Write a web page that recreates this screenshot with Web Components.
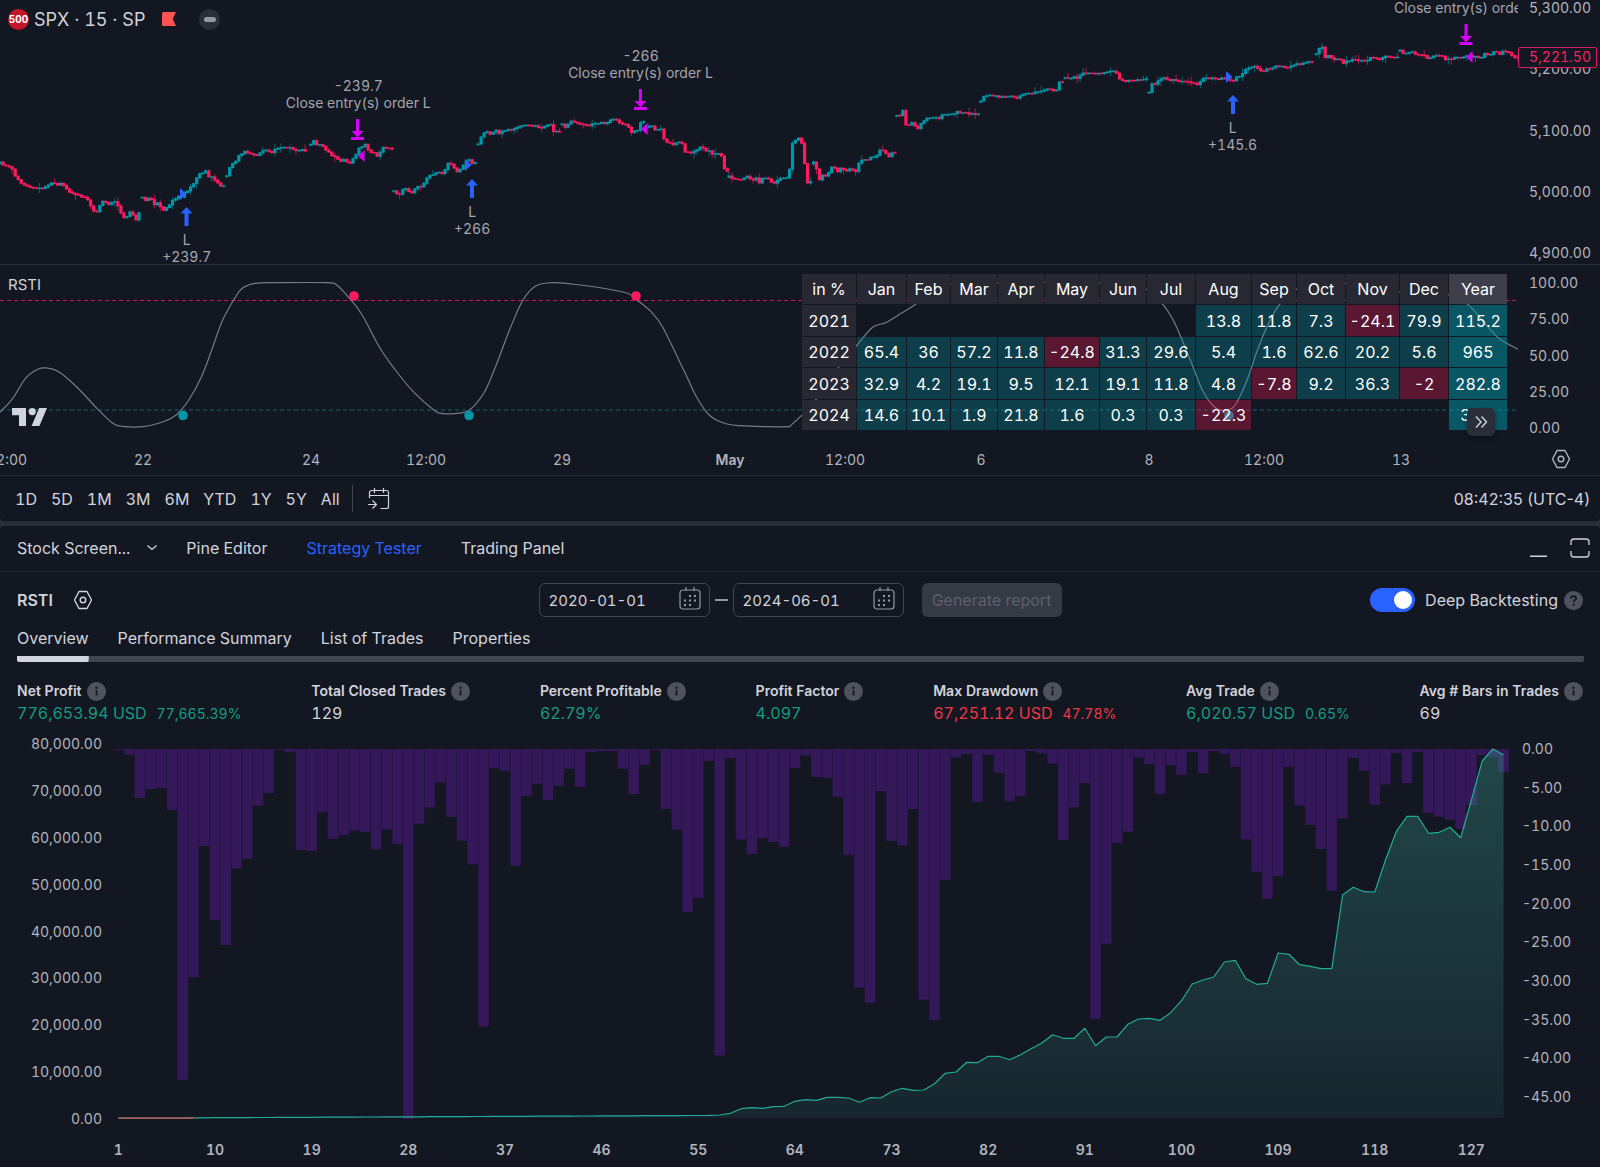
<!DOCTYPE html>
<html lang="en">
<head>
<meta charset="utf-8">
<title>SPX · Strategy Tester</title>
<style>
  html, body { margin: 0; padding: 0; }
  body {
    background: #131722;
    color: #d1d4dc;
    font-family: Inter, "Liberation Sans", sans-serif;
    font-size: 16px;
    font-variant-numeric: tabular-nums;
    --bg: #131722;
    --line: #2a2e39;
    --muted: #b2b5be;
    --up: #0097a7;
    --down: #ff1a5e;
    --blue: #2962ff;
    --green: #159b80;
    --red: #f23645;
  }
</style>
</head>
<body>
<trading-page></trading-page>
<script>
const define = (name, html, setup) => {
  const tpl = document.createElement('template');
  tpl.innerHTML = html;
  customElements.define(name, class extends HTMLElement {
    constructor() {
      super();
      this.attachShadow({ mode: 'open' }).append(tpl.content.cloneNode(true));
    }
    connectedCallback() { if (setup) setup(this, this.shadowRoot); }
  });
};

/* ---------- icons ---------- */
const hexagon = '<path d="M6 1.500h8l4.500 8.500-4.500 8.500H6L1.500 10z" stroke-width="1.400" stroke-linejoin="round"/><circle cx="10" cy="10" r="2.800" stroke-width="1.400"/>';
const ICONS = {
  hex: [20, 20, hexagon],
  goto: [24, 24, '<path d="M2.500 11V5.500a2 2 0 0 1 2-2h15a2 2 0 0 1 2 2v14a2 2 0 0 1-2 2h-6M2.500 8.500h19M7.500 1v5M16.500 1v5M1 17.500h8M5.500 13.500l4 4-4 4"/>'],
  chevron: [12, 8, '<path d="M1.500 1.500 6 5.500l4.500-4" stroke-width="1.300"/>'],
  minimise: [18, 20, '<path d="M0 18.200h17" stroke-width="1.500"/>'],
  maximise: [20, 20, '<path d="M1 7V4a3 3 0 0 1 3-3h12a3 3 0 0 1 3 3v3M1 13v3a3 3 0 0 0 3 3h12a3 3 0 0 0 3-3v-3" stroke-width="1.300"/>'],
  calendar: [22, 24, '<rect x="1" y="3" width="20" height="19" rx="3"/><path d="M7 0v4M15 0v4"/><g fill="currentColor" stroke="none"><rect x="10" y="8" width="2" height="2"/><rect x="15" y="8" width="2" height="2"/><rect x="5" y="12.500" width="2" height="2"/><rect x="10" y="12.500" width="2" height="2"/><rect x="15" y="12.500" width="2" height="2"/><rect x="5" y="17" width="2" height="2"/><rect x="10" y="17" width="2" height="2"/></g>'],
  info: [19, 19, '<circle cx="9.500" cy="9.500" r="9.500" fill="#50535e" stroke="none"/><path d="M9.500 8.300v5.200" stroke="#131722" stroke-width="1.800"/><circle cx="9.500" cy="5.700" r="1.200" fill="#131722" stroke="none"/>'],
  help: [19, 19, '<circle cx="9.500" cy="9.500" r="9.500" fill="#50535e" stroke="none"/><path d="M6.900 7.600c0-3.300 5.300-3.200 5.300-.3 0 1.800-2.600 1.900-2.600 4" stroke="#131722" stroke-width="1.800"/><circle cx="9.600" cy="13.800" r="1.100" fill="#131722" stroke="none"/>'],
  forward: [16, 16, '<path d="M3 2.500 8 8l-5 5.500M8.500 2.500l5 5.500-5 5.500" stroke-width="1.400"/>'],
  flag: [14, 14, '<path d="M1.500 0H14l-3.300 7L14 14H1.500A1.500 1.500 0 0 1 0 12.500v-11A1.500 1.500 0 0 1 1.500 0z" fill="#ff5252" stroke="none"/>'],
  logo: [36, 18, '<g fill="currentColor" stroke="none"><path d="M0 0h14v18H7V7.200H0z"/><circle cx="20.200" cy="3.600" r="3.600"/><path d="M27.200 0H35l-7.600 18h-7.800z"/></g>']
};
define('tv-icon', `<style>:host{display:block;flex:none}svg{display:block}</style>`, (host, root) => {
  const [w, h, body] = ICONS[host.getAttribute('name')];
  root.innerHTML += `<svg width="${w}" height="${h}" viewBox="0 0 ${w} ${h}" fill="none" stroke="currentColor" stroke-width="1.200" aria-hidden="true">${body}</svg>`;
});

/* ---------- shared tick row: each tick takes the space up to its own position ---------- */
define('tick-row', `
<style>
  :host { display: flex; line-height: 18px; }
  i { font-style: normal; display: flex; justify-content: flex-end; min-width: 0; }
  span { width: 0; display: flex; justify-content: center; white-space: nowrap; }
  .b { font-weight: 600; }
</style>`, (host, root) => {
  let last = 0;
  for (const item of host.getAttribute('ticks').split('|')) {
    const [at, label] = item.split('=');
    const cell = document.createElement('i');
    cell.style.flex = `${at - last} 0 0`;
    last = +at;
    const text = document.createElement('span');
    text.textContent = label.replace('*', '');
    if (label.startsWith('*')) text.className = 'b';
    cell.append(text);
    root.append(cell);
  }
  const rest = document.createElement('i');
  rest.style.flex = `${host.getAttribute('span') - last} 0 0`;
  root.append(rest);
});

define('value-axis', `
<style>
  :host { display: flex; flex-direction: column; justify-content: space-between; line-height: 16px; font-size: 14px; color: var(--muted); box-sizing: border-box; }
</style>`, (host, root) => {
  for (const v of host.getAttribute('values').split(' ')) {
    const s = document.createElement('span');
    s.textContent = v;
    root.append(s);
  }
});

/* ---------- price pane ---------- */
const SX = 2.904, TX = 2.8;
const SEGMENTS = [
  [0, SX, '0,488 18,497 36,508 45,530 60,548 80,556 95,565 110,560 120,568 133,556 150,548 165,556 178,550 190,560 205,578 225,582 240,590 255,598 265,625 275,638 283,630 295,602 305,606 315,612 330,600 340,615 348,625 355,655 368,650 378,637 388,645 395,658 402,640 410,638'],
  [0, SX, '413,590 420,602 430,594 440,598 445,616 460,608 468,622 476,630 485,618 497,608 505,595 520,588 530,590 540,572 550,568 557,552 568,548 572,525 585,518 597,512 600,530 612,530 620,535 630,545 640,556 655,558'],
  [0, SX, '658,526 665,505 672,490 685,485 690,468 700,460 710,453 725,460 740,468 748,466 757,452 775,450 790,460 800,448 812,440 845,440 855,450 875,449 893,451'],
  [0, SX, '902,432 910,418 915,432 935,433 945,448 955,455 962,466 975,472 985,482 1000,480 1015,488 1022,478 1035,462 1045,440 1060,433 1070,452 1085,457 1095,468 1103,455 1112,443 1125,444 1140,447'],
  [0, SX, '1143,570 1155,582 1165,578 1175,560 1185,572 1198,578 1207,560 1220,560 1232,545 1245,528 1260,520 1275,514 1287,522 1295,498 1305,485 1315,495 1322,512 1332,515 1345,495 1360,475 1368,488 1385,490'],
  [0, SX, '1388,430 1392,420 1400,405 1410,388 1420,402 1430,398 1440,388 1450,400 1465,390 1482,390 1497,384 1512,374 1532,374 1552,378 1572,385 1584,378 1600,374 1607,393 1624,395'],
  [500, SX, '180,370 185,382 197,375 205,362 220,365 235,372 255,376 270,372 290,366 308,370 320,358 335,359 350,368 365,375 378,380 382,400 392,392 402,388 407,365 420,365'],
  [500, SX, '432,378 445,380 452,396 460,385 472,388 478,430 490,426 500,436 515,428 528,428 532,458 545,455 555,460 570,450 583,440 595,450 610,455 618,465 630,460 648,467 652,512 662,514'],
  [500, SX, '665,528 675,538 690,540 705,535 718,528 732,540 742,530 752,548 760,534 775,535 785,545 798,552 808,538 825,534 838,528 842,495 848,430 858,420 868,412 876,430 884,490 893,546 905,545'],
  [500, SX, '910,488 918,505 928,540 940,515 948,535 958,507 968,497 980,512 992,500 1002,516 1015,508 1035,512 1040,490 1050,478 1065,480 1078,470 1095,465 1103,452 1118,454 1128,472 1138,460 1150,460'],
  [500, SX, '1152,345 1160,345 1170,328 1176,376 1188,375 1197,364 1205,380 1215,388 1222,370 1235,358 1255,350 1272,356 1282,345 1305,345 1325,335 1345,340 1370,339 1392,344'],
  [500, SX, '1396,303 1400,290 1430,286 1460,291 1480,288 1500,293 1520,283 1545,280 1568,272 1578,267 1615,272 1622,248 1635,247'],
  [1040, TX, '70,230 82,236 92,228 105,235 115,220 140,218 165,220 185,219 205,213 215,220 218,238 240,242 260,240 280,237 300,234'],
  [1040, TX, '305,275 312,250 322,255 335,238 350,232 362,239 380,241 400,243 420,245 440,252 455,238 470,233 495,238 515,234 540,243 550,232 570,220 578,205 600,199 612,208 625,212 640,206 660,198 680,199 700,201 715,193 740,188 768,184'],
  [1040, TX, '773,160 780,145 790,143 797,172 810,165 820,178 840,178 850,190 860,180 890,181 915,185 925,173 950,176 965,170 1003,169'],
  [1040, TX, '1008,150 1015,160 1040,157 1065,163 1085,173 1105,165 1125,166 1130,180 1150,175 1170,174 1188,170 1215,168 1238,172 1245,160 1260,168 1275,148 1283,168 1295,155 1310,155 1320,168 1340,172']
];
function candles() {
  let seed = 11, out = '';
  const rnd = () => (seed = (seed * 16807) % 2147483647) / 2147483647;
  for (const [origin, scale, list] of SEGMENTS) {
    const pts = list.split(' ').map(p => { const [x, y] = p.split(','); return [origin + x / scale, y / 3]; });
    const end = pts[pts.length - 1][0];
    let k = 0, open = pts[0][1] + 1;
    for (let x = pts[0][0]; x <= end + 0.5; x += 3.02) {
      while (k < pts.length - 2 && pts[k + 1][0] < x) k++;
      const [x0, y0] = pts[k], [x1, y1] = pts[k + 1];
      const t = Math.min(1, Math.max(0, (x - x0) / (x1 - x0)));
      const close = y0 + (y1 - y0) * t + (rnd() - 0.5) * 1.8;
      const up = close <= open, top = Math.min(open, close) - 0.3, h = Math.max(1.5, Math.abs(open - close) + 1);
      const wick = rnd() < 0.25 ? 5 : 1.5;
      const col = up ? 'var(--up)' : 'var(--down)';
      out += `<path d="M${x.toFixed(1)} ${(top - rnd() * wick).toFixed(1)}V${(top + h + rnd() * wick).toFixed(1)}" stroke="${col}" stroke-width=".8" opacity=".8"/>`;
      out += `<rect x="${(x - 1.5).toFixed(1)}" y="${top.toFixed(1)}" width="3.200" height="${h.toFixed(1)}" fill="${col}"/>`;
      open = close;
    }
  }
  return out;
}
define('price-pane', `
<style>
  :host { display: flex; height: 264px; border-bottom: 1px solid var(--line); position: relative; }
  .plot { flex: 1; position: relative; overflow: hidden; }
  .plot > svg { display: block; width: 100%; height: 264px; }
  value-axis { width: 82px; padding: 0 0 3px 11px; }
  header { position: absolute; left: 8px; top: 8px; height: 22px; display: flex; align-items: center; }
  h1 { margin: 0 17px 0 5px; font-size: 18px; font-weight: 400; }
  .badge { width: 21px; height: 21px; border-radius: 50%; background: #c4162a; color: #fff; font-size: 10px; font-weight: 700; display: flex; align-items: center; justify-content: center; }
  header button { margin-left: 23px; width: 21px; height: 21px; border: 0; border-radius: 50%; background: var(--line); padding: 0; display: flex; align-items: center; justify-content: center; }
  header button::before { content: ""; width: 12px; height: 5px; border-radius: 3px; background: #9598a1; }
  .note { position: absolute; width: 0; display: flex; flex-direction: column; align-items: center; white-space: nowrap; font-size: 14px; line-height: 17px; color: #a3a6af; }
  .last { position: absolute; right: 3px; top: 47px; width: 79px; height: 21px; box-sizing: border-box; border: 1px solid #d81b60; border-radius: 2px; background: var(--bg); color: #f7215d; font-size: 14px; line-height: 18px; padding-left: 10px; }
</style>
<div class="plot">
  <svg viewBox="0 0 1518 264" preserveAspectRatio="none" role="img" aria-label="SPX price candles"></svg>
  <div class="note" style="left:23.600%;top:77px"><span>-239.7</span><span>Close entry(s) order L</span></div>
  <div class="note" style="left:42.200%;top:47px"><span>-266</span><span>Close entry(s) order L</span></div>
  <div class="note" style="left:96.600%;top:-1px"><span>Close entry(s) order L</span></div>
  <div class="note" style="left:12.300%;top:231px"><span>L</span><span>+239.7</span></div>
  <div class="note" style="left:31.100%;top:203px"><span>L</span><span>+266</span></div>
  <div class="note" style="left:81.200%;top:119px"><span>L</span><span>+145.6</span></div>
</div>
<value-axis values="5,300.00 5,200.00 5,100.00 5,000.00 4,900.00"></value-axis>
<div class="last">5,221.50</div>
<header><span class="badge">500</span><h1>SPX · 15 · SP</h1><tv-icon name="flag"></tv-icon><button aria-label="Collapse legend"></button></header>`,
(host, root) => {
  let marks = '';
  for (const [x, y] of [[357.5, 119], [640.5, 89], [1466, 24]])
    marks += `<path d="M${x - 1.5} ${y}h3v12h4.500l-6 6.500-6-6.500h4.500zM${x - 6.500} ${y + 18}h13v3h-13z"/>`;
  for (const [x, y] of [[358, 150], [641, 123], [1466, 51]]) marks += `<path d="M${x} ${y + 6}l6.500-6v12z"/>`;
  let buys = '';
  for (const [x, y] of [[186.5, 208], [472, 180], [1233, 96]])
    buys += `<path d="M${x} ${y - 1}l6 6.500h-4v12.500h-4v-12.500h-4z"/>`;
  for (const [x, y] of [[180, 188], [465, 159], [1226, 71]]) buys += `<path d="M${x} ${y}l6.500 6-6.500 6z"/>`;
  root.querySelector('.plot > svg').innerHTML = candles() + `<g fill="#d500f9">${marks}</g><g fill="#2962ff">${buys}</g>`;
});

/* ---------- monthly returns ---------- */
define('returns-table', `
<style>
  :host { display: block; }
  table { border-collapse: separate; border-spacing: 1px; table-layout: fixed; width: 707px; font-size: 16px; color: #fff; }
  th, td { height: 30px; padding: 0; text-align: center; font-weight: 400; line-height: 20px; white-space: nowrap; }
  tr:nth-child(even) > * { height: 31px; }
  th { background: #282832; }
  th.y { background: #3f3f4b; }
  td.p { background: rgba(0,151,167,.3); }
  td.n { background: rgba(255,23,90,.3); }
  td.y { background: rgba(0,151,167,.5); }
</style>
<table></table>`, (host, root) => {
  const widths = [54, 49, 43, 46, 46, 54, 46, 48, 55, 44, 48, 53, 48, 58];
  const rows = [
    'in % Jan Feb Mar Apr May Jun Jul Aug Sep Oct Nov Dec Year',
    '2021 . . . . . . . 13.8 11.8 7.3 -24.1 79.9 115.2',
    '2022 65.4 36 57.2 11.8 -24.8 31.3 29.6 5.4 1.6 62.6 20.2 5.6 965',
    '2023 32.9 4.2 19.1 9.5 12.1 19.1 11.8 4.8 -7.8 9.2 36.3 -2 282.8',
    '2024 14.6 10.1 1.9 21.8 1.6 0.3 0.3 -22.3 . . . . 30.3'
  ].map(r => r.replace('in %', 'in\u00a0%').split(' '));
  root.querySelector('table').innerHTML =
    '<colgroup>' + widths.map(w => `<col style="width:${w}px">`).join('') + '</colgroup>' +
    rows.map((r, i) => '<tr>' + r.map((c, j) => {
      if (i === 0) return `<th scope="col" class="${j === 13 ? 'y' : ''}">${c}</th>`;
      if (j === 0) return `<th scope="row">${c}</th>`;
      if (c === '.') return '<td></td>';
      return `<td class="${j === 13 ? 'y' : c[0] === '-' ? 'n' : 'p'}">${c}</td>`;
    }).join('') + '</tr>').join('');
});

/* ---------- oscillator pane ---------- */
function smooth(pts) {
  let d = `M${pts[0][0].toFixed(1)} ${pts[0][1].toFixed(1)}`;
  for (let i = 0; i < pts.length - 1; i++) {
    const a = pts[i - 1] || pts[i], b = pts[i], c = pts[i + 1], e = pts[i + 2] || c;
    d += `C${[b[0] + (c[0] - a[0]) / 6, b[1] + (c[1] - a[1]) / 6, c[0] - (e[0] - b[0]) / 6, c[1] - (e[1] - b[1]) / 6, c[0], c[1]].map(n => n.toFixed(1)).join(' ')}`;
  }
  return d;
}
define('oscillator-pane', `
<style>
  :host { display: flex; height: 177px; position: relative; }
  .plot { flex: 1; position: relative; overflow: hidden; }
  svg { display: block; width: 100%; height: 177px; }
  value-axis { width: 82px; padding: 10px 0 6px 11px; }
  h2 { position: absolute; left: 8px; top: 11px; margin: 0; font-size: 15px; font-weight: 400; line-height: 18px; }
  tv-icon.logo { position: absolute; left: 12px; top: 143px; }
  returns-table { position: absolute; right: 92px; top: 8px; }
  button { position: absolute; right: 105px; top: 143px; width: 28px; height: 28px; border: 0; border-radius: 5px; background: #2a2e39; color: #d1d4dc; padding: 0; display: flex; align-items: center; justify-content: center; box-shadow: 0 2px 4px rgba(0,0,0,.4); }
</style>
<div class="plot"><svg viewBox="0 0 1518 177" preserveAspectRatio="none" role="img" aria-label="RSTI oscillator"></svg></div>
<value-axis values="100.00 75.00 50.00 25.00 0.00"></value-axis>
<h2>RSTI</h2>
<tv-icon class="logo" name="logo"></tv-icon>
<returns-table></returns-table>
<button aria-label="Scroll to the most recent bar"><tv-icon name="forward"></tv-icon></button>`,
(host, root) => {
  const left = '0,457 25,415 50,355 75,327 92,324 115,335 150,380 190,445 220,488 240,499 280,500 320,485 345,465 370,420 395,350 415,270 435,185 460,115 475,85 500,70 545,68 640,68 660,75 685,115 710,165 745,265 775,330 810,395 850,450 865,460 890,461 920,450 948,400 970,325 1000,205 1025,120 1050,78 1080,68 1120,72 1180,84 1230,100 1250,122 1278,158 1300,205 1340,330 1365,410 1390,465 1420,490 1450,497 1500,500 1545,500';
  const right = '0,498 20,470 55,410 95,320 130,255 160,202 185,188 215,160 243,133 275,90 310,72 400,68 600,68 690,88 722,133 745,190 775,300 800,395 825,445 845,450 862,435 885,360 905,270 925,195 948,133 985,85 1075,70 1180,96 1275,105 1312,133 1345,190 1375,238 1410,268';
  const read = (s, o, k) => s.split(' ').map(p => { const [x, y] = p.split(','); return [o + x / k, y / 3 - 5]; });
  const d = smooth([...read(left, 0, 1.96), ...read(right, 790, 1.936)]);
  const dot = (x, y, c) => `<circle cx="${x}" cy="${y}" r="4.800" fill="${c}"/>`;
  root.querySelector('svg').innerHTML =
    `<path d="M0 35.500H1518" stroke="#c2185b" stroke-dasharray="4 3"/>
     <path d="M0 145H1518" stroke="#0b6673" stroke-dasharray="4 3"/>
     <path d="${d}" fill="none" stroke="#787b86" stroke-width="1.200"/>` +
    dot(183, 150.5, '#0097a7') + dot(469, 150.5, '#0097a7') + dot(1229, 150.5, '#0097a7') +
    dot(354, 31, '#ff1a5e') + dot(636, 31, '#ff1a5e');
});

define('time-axis', `
<style>
  :host { display: flex; align-items: center; height: 33px; border-bottom: 1px solid var(--line); overflow: hidden; color: var(--muted); font-size: 14px; }
  tick-row { flex: 1; padding-top: 2px; }
  button { width: 82px; background: none; border: 0; padding: 0 0 0 33px; color: inherit; }
</style>
<tick-row span="1518" ticks="7=12:00|143=22|311=24|426=12:00|562=29|730=*May|845=12:00|981=6|1149=8|1264=12:00|1401=13"></tick-row>
<button aria-label="Time scale settings"><tv-icon name="hex"></tv-icon></button>`);

define('range-bar', `
<style>
  :host { display: flex; align-items: center; height: 45px; padding: 0 10px 0 15px; gap: 14px; }
  button { all: unset; font-size: 16px; line-height: 20px; font-variant-numeric: tabular-nums; }
  hr { width: 1px; height: 27px; margin: 0 0 0 -2px; border: 0; background: #434651; }
  time { margin-left: auto; font-variant-numeric: normal; }
</style>
<button>1D</button><button>5D</button><button>1M</button><button>3M</button><button>6M</button><button>YTD</button><button>1Y</button><button>5Y</button><button>All</button>
<hr><button aria-label="Go to date"><tv-icon name="goto"></tv-icon></button>
<time>08:42:35 (UTC-4)</time>`);

define('panel-tabs', `
<style>
  :host { display: flex; align-items: center; height: 43px; border-bottom: 1px solid #232733; padding: 0 10px 2px 17px; }
  nav { display: flex; flex: 1; gap: 39px; }
  button { all: unset; display: flex; align-items: center; gap: 16px; font-size: 16px; line-height: 20px; }
  nav button:first-child { margin-right: -11px; }
  [aria-current] { color: var(--blue); }
  .tools { display: flex; gap: 22px; }
</style>
<nav><button>Stock Screen... <tv-icon name="chevron"></tv-icon></button><button>Pine Editor</button><button aria-current="true">Strategy Tester</button><button>Trading Panel</button></nav>
<div class="tools"><button aria-label="Minimise panel"><tv-icon name="minimise"></tv-icon></button><button aria-label="Maximise panel"><tv-icon name="maximise"></tv-icon></button></div>`);

define('date-field', `
<style>
  :host { display: flex; align-items: center; box-sizing: border-box; width: 171px; height: 34px; border: 1px solid #434651; border-radius: 6px; padding: 0 8px 0 9px; }
  input { all: unset; flex: 1; min-width: 0; font-size: 15px; color: #d1d4dc; font-variant-numeric: tabular-nums; }
  tv-icon { color: #9598a1; margin-bottom: 2px; }
</style>
<input type="text"><tv-icon name="calendar"></tv-icon>`, (host, root) => {
  const i = root.querySelector('input');
  i.value = host.getAttribute('value');
  i.setAttribute('aria-label', host.getAttribute('label'));
});

define('tester-controls', `
<style>
  :host { display: grid; grid-template-columns: 1fr auto 1fr; align-items: center; padding: 10px 17px 0; height: 36px; }
  .name { display: flex; align-items: center; gap: 20px; }
  h2 { margin: 0; font-size: 16px; font-weight: 600; }
  .name button { all: unset; }
  .range { display: flex; align-items: center; }
  .dash { width: 13px; height: 2px; background: #9598a1; margin: 0 5px; }
  .run { font: inherit; width: 140px; height: 34px; border: 0; border-radius: 6px; background: #363a45; color: #5d606b; margin-left: 18px; padding: 0; white-space: nowrap; }
  label { display: flex; align-items: center; justify-content: flex-end; white-space: nowrap; }
  input { appearance: none; margin: 0 10px 0 0; width: 45px; height: 24px; border-radius: 12px; background: var(--blue); display: flex; align-items: center; justify-content: flex-end; padding-right: 3px; box-sizing: border-box; }
  input::before { content: ""; width: 18px; height: 18px; border-radius: 50%; background: #fff; }
  label tv-icon { margin-left: 6px; }
</style>
<div class="name"><h2>RSTI</h2><button aria-label="Strategy settings"><tv-icon name="hex"></tv-icon></button></div>
<div class="range"><date-field value="2020-01-01" label="From"></date-field><span class="dash"></span><date-field value="2024-06-01" label="To"></date-field><button class="run" disabled>Generate report</button></div>
<label><input type="checkbox" role="switch" checked>Deep Backtesting<tv-icon name="help"></tv-icon></label>`);

define('report-tabs', `
<style>
  :host { display: block; padding: 10px 16px 0 17px; }
  nav { display: flex; gap: 29px; height: 34px; background: linear-gradient(#434651, #434651) bottom / 100% 6px no-repeat; border-radius: 2px; }
  button { all: unset; box-sizing: border-box; height: 34px; padding-bottom: 14px; font-size: 16px; line-height: 20px; }
  [aria-selected] { background: linear-gradient(#d1d4dc, #d1d4dc) bottom / 100% 6px no-repeat; border-radius: 2px; }
</style>
<nav role="tablist"><button role="tab" aria-selected="true">Overview</button><button role="tab">Performance Summary</button><button role="tab">List of Trades</button><button role="tab">Properties</button></nav>`);

define('report-metric', `
<style>
  :host { display: block; white-space: nowrap; }
  .l { display: flex; align-items: center; gap: 5px; font-size: 14px; font-weight: 600; line-height: 20px; }
  .v { display: flex; align-items: baseline; gap: 10px; font-size: 16px; line-height: 24px; }
  small { font-size: 14px; }
  small:empty { display: none; }
  :host([tone=up]) .v { color: var(--green); }
  :host([tone=down]) .v { color: var(--red); }
</style>
<div class="l"><slot name="label"></slot><tv-icon name="info"></tv-icon></div>
<div class="v"><slot></slot><small></small></div>`, (host, root) => {
  root.querySelector('small').textContent = host.getAttribute('percent') || '';
});

define('report-summary', `
<style>:host { display: flex; justify-content: space-between; padding: 19px 17px 0; }</style>
<report-metric tone="up" percent="77,665.39%"><span slot="label">Net Profit</span>776,653.94 USD</report-metric>
<report-metric><span slot="label">Total Closed Trades</span>129</report-metric>
<report-metric tone="up"><span slot="label">Percent Profitable</span>62.79%</report-metric>
<report-metric tone="up"><span slot="label">Profit Factor</span>4.097</report-metric>
<report-metric tone="down" percent="47.78%"><span slot="label">Max Drawdown</span>67,251.12 USD</report-metric>
<report-metric tone="up" percent="0.65%"><span slot="label">Avg Trade</span>6,020.57 USD</report-metric>
<report-metric><span slot="label">Avg # Bars in Trades</span>69</report-metric>`);

/* ---------- equity and drawdown ---------- */
const DRAWDOWN = [58,74,204,177,173,240,1049,742,348,570,645,415,386,226,189,58,66,360,363,246,326,315,301,305,358,298,342,1166,281,232,157,260,332,403,889,114,122,407,197,161,210,167,116,171,66,63,63,116,192,104,60,237,299,546,503,93,976,84,328,372,324,336,350,114,76,141,143,200,374,773,818,183,332,346,237,809,870,449,82,72,216,74,128,214,198,63,70,101,330,232,159,866,641,338,305,82,102,192,105,135,66,129,63,71,110,328,425,507,438,110,226,285,357,483,265,84,123,224,163,69,159,66,248,260,269,296,226,75,81,125];
const EQUITY_TAIL = [1155,1150,1136,1133,1135,1130,1129,1114,1109,1111,1102,1102,1104,1117,1103,1104,1085,1075,1081,1080,1061,1030,1026,997,998,979,979,989,974,956,939,914,925,925,895,947,921,921,883,867,865,871,848,812,762,750,741,696,691,746,763,760,669,673,704,709,716,716,495,472,485,486,390,305,259,259,310,307,292,323,210,93,57,75];
define('equity-chart', `
<style>
  :host { display: grid; grid-template-columns: 102px 1fr 80px; column-gap: 11px; padding-top: 9px; color: var(--muted); }
  value-axis { line-height: 18px; }
  .money { height: 393px; align-items: flex-end; }
  .pct { height: 366px; margin: 5px 0 0 2px; }
  svg { display: block; width: 100%; height: 369px; margin-top: 14px; overflow: visible; }
  tick-row { grid-column: 2; font-size: 14px; font-weight: 600; padding: 13px 0 9px; }
</style>
<value-axis class="money" values="80,000.00 70,000.00 60,000.00 50,000.00 40,000.00 30,000.00 20,000.00 10,000.00 0.00"></value-axis>
<svg viewBox="0 0 1396 369" preserveAspectRatio="none" role="img" aria-label="Equity and drawdown by trade"></svg>
<value-axis class="pct" values="0.00 -5.00 -10.00 -15.00 -20.00 -25.00 -30.00 -35.00 -40.00 -45.00"></value-axis>
<tick-row span="130" ticks="0.5=1|9.5=10|18.5=19|27.5=28|36.5=37|45.5=46|54.5=55|63.5=64|72.5=73|81.5=82|90.5=91|99.5=100|108.5=109|117.5=118|126.5=127"></tick-row>`,
(host, root) => {
  const step = 1396 / 130, y = v => (v - 57) / 3;
  const bars = DRAWDOWN.map((v, i) => {
    const h = Math.max(0.8, y(v)).toFixed(1);
    return `<rect x="${(i * step).toFixed(2)}" width="${step.toFixed(2)}" height="${h}" fill="#29184b"/><rect x="${(i * step + .4).toFixed(2)}" width="${(step - .9).toFixed(2)}" height="${h}" fill="#351859"/>`;
  }).join('');
  const eq = [];
  for (let i = 0; i < 56; i++) eq.push(i < 7 ? 1164.5 : 1163.5 - (i - 7) * 0.15);
  eq.push(...EQUITY_TAIL);
  const pts = eq.map((v, i) => `${((i + .5) * step).toFixed(1)} ${y(v).toFixed(1)}`);
  const line = 'M' + pts.join('L');
  root.querySelector('svg').innerHTML = `
    <defs><linearGradient id="g" x1="0" y1="0" x2="0" y2="1"><stop offset="0" stop-color="#42bda8" stop-opacity=".29"/><stop offset="1" stop-color="#42bda8" stop-opacity=".09"/></linearGradient></defs>
    ${bars}
    <path d="${line}V369H${(step / 2).toFixed(1)}Z" fill="url(#g)"/>
    <path d="${line}" fill="none" stroke="#22ab94" stroke-width="1.200" stroke-linejoin="round"/>
    <path d="M${pts.slice(0, 8).join('L')}" fill="none" stroke="#d9534f" stroke-width="1.200"/>`;
});

define('trading-page', `
<style>
  :host { display: flex; flex-direction: column; gap: 5px; background: var(--line); min-height: 100vh; }
  section { background: var(--bg); overflow: hidden; }
  .chart { border-radius: 0 0 4px 4px; }
  .tester { border-radius: 4px 4px 0 0; flex: 1; }
</style>
<section class="chart"><price-pane></price-pane><oscillator-pane></oscillator-pane><time-axis></time-axis><range-bar></range-bar></section>
<section class="tester"><panel-tabs></panel-tabs><tester-controls></tester-controls><report-tabs></report-tabs><report-summary></report-summary><equity-chart></equity-chart></section>`);
</script>
</body>
</html>
